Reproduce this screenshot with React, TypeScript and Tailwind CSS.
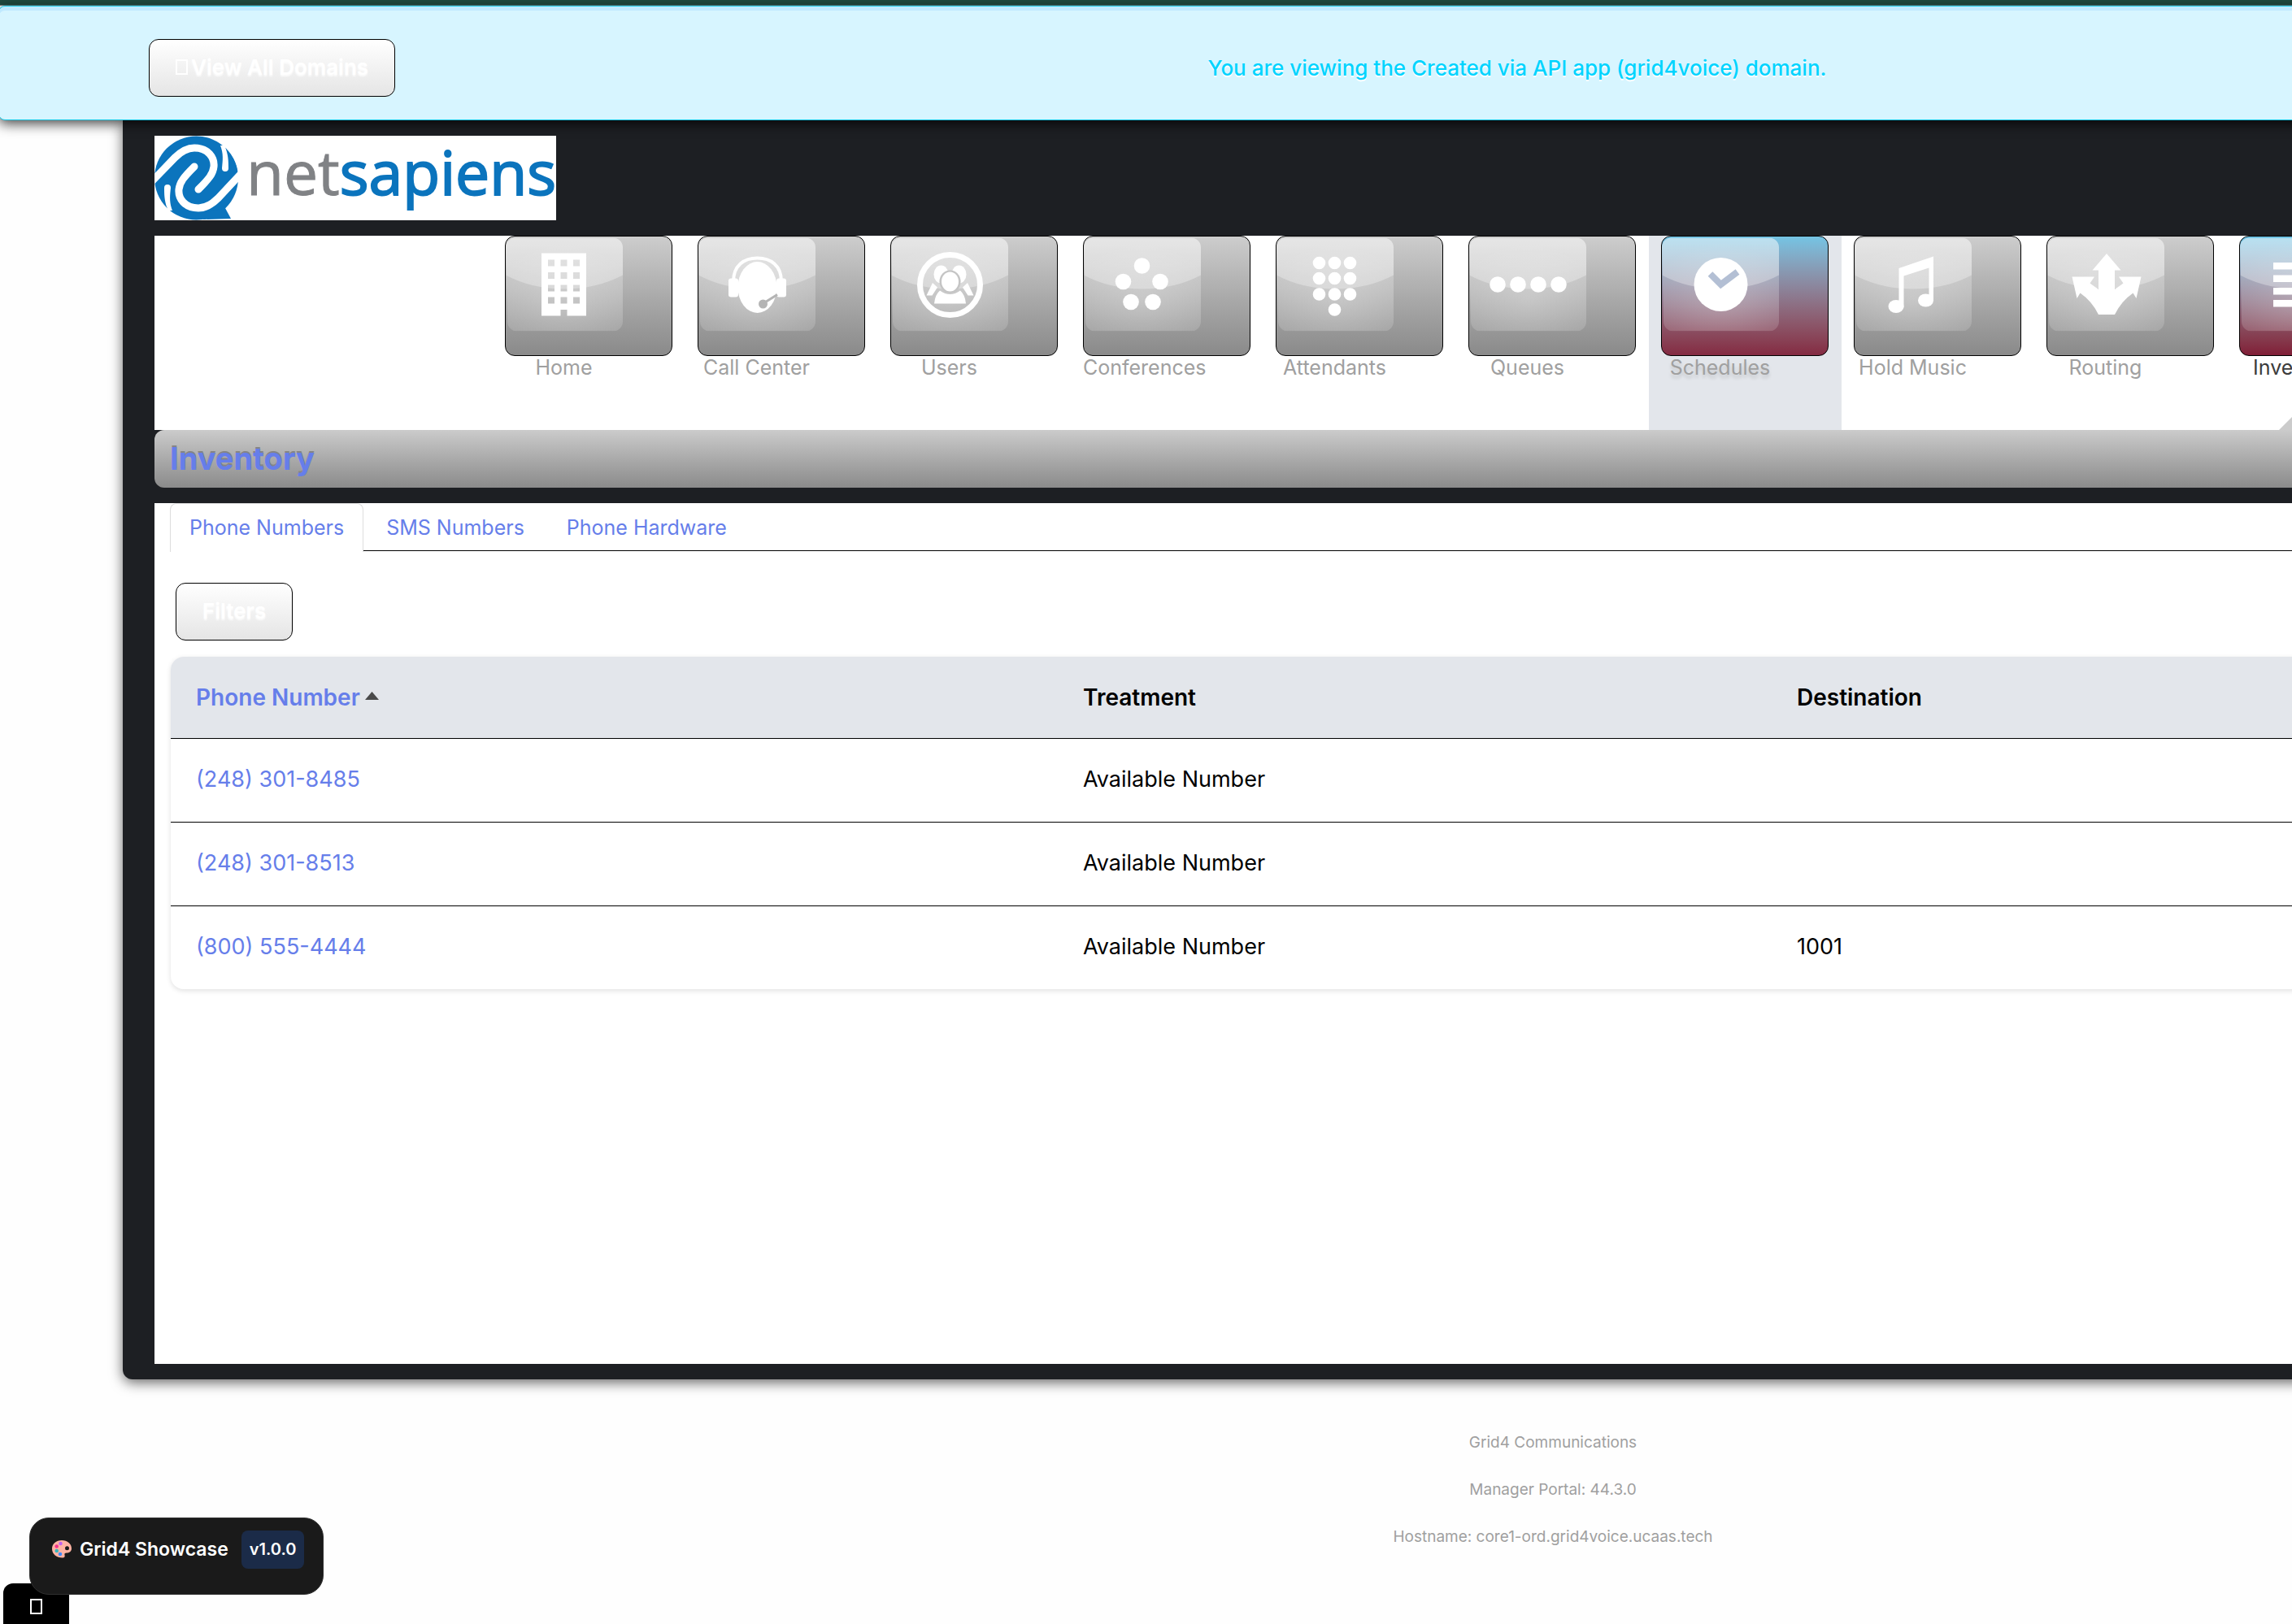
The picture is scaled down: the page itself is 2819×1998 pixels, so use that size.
import type { ReactNode } from "react";

const sans = "font-['Inter','Liberation_Sans',sans-serif]";

type NavItem = { label: string; icon: ReactNode; tone?: "blue" | "hover" };

const dots = (points: number[][], r: number) =>
  points.map(([cx, cy]) => <circle key={`${cx}-${cy}`} cx={cx} cy={cy} r={r} fill="#fff" />);

const items: NavItem[] = [
  {
    label: "Home",
    icon: (
      <path
        fill="#fff"
        fillRule="evenodd"
        d="M44 19h55v77H75.500v-7.500h-8V96H44zM52 27h8v8h-8zM67.500 27h8v8h-8zM83 27h8v8h-8zM52 42.500h8v8h-8zM67.500 42.500h8v8h-8zM83 42.500h8v8h-8zM52 58h8v8h-8zM67.500 58h8v8h-8zM83 58h8v8h-8zM52 73h8v8h-8zM67.500 73h8v8h-8zM83 73h8v8h-8z"
      />
    ),
  },
  {
    label: "Call Center",
    icon: (
      <g>
        <ellipse cx="72.500" cy="61" rx="24" ry="31.500" fill="#fff" />
        <path d="M43 54C43 34 56 25 72.500 25S102 34 102 54" fill="none" stroke="#fff" strokeWidth="4" />
        <rect x="37" y="50" width="12" height="23" rx="3" fill="#fff" />
        <rect x="96" y="50" width="12" height="23" rx="3" fill="#fff" />
        <path d="M97 70L81 80" stroke="#b4b4b4" strokeWidth="3" />
        <circle cx="79.500" cy="81.500" r="5.500" fill="#b4b4b4" />
      </g>
    ),
  },
  {
    label: "Users",
    icon: (
      <g>
        <circle cx="72.500" cy="58" r="37" fill="none" stroke="#fff" strokeWidth="7" />
        <ellipse cx="61.500" cy="45" rx="9" ry="11" fill="#fff" />
        <ellipse cx="83.500" cy="45" rx="9" ry="11" fill="#fff" />
        <path d="M51 55.500L57 61L50.500 71H43.500zM94 55.500L88 61L94.500 71H101.500z" fill="#fff" />
        <ellipse cx="72.500" cy="54" rx="13" ry="14" fill="#c4c4c4" />
        <ellipse cx="72.500" cy="54" rx="10.500" ry="12" fill="#fff" />
        <path d="M60 65Q72.500 74 85 65Q91 70 92 81H53Q54 70 60 65z" fill="#fff" />
      </g>
    ),
  },
  { label: "Conferences", icon: dots([[71.5, 34.5], [48.5, 54], [94, 54], [58, 79], [85, 79]], 9.8) },
  {
    label: "Attendants",
    icon: dots(
      [[52.5, 31], [71.5, 31], [90.5, 31], [52.5, 50], [71.5, 50], [90.5, 50], [52.5, 69.5], [71.5, 69.5], [90.5, 69.5], [71.5, 88.5]],
      7.8,
    ),
  },
  { label: "Queues", icon: dots([[35, 57.5], [60, 57.5], [85, 57.5], [110, 57.5]], 9.8) },
  {
    label: "Schedules",
    tone: "hover",
    icon: (
      <g>
        <circle cx="72.500" cy="57.500" r="33" fill="#fff" />
        <path d="M59.500 44.500L72.500 57.500L93 42" fill="none" stroke="#b3bfd4" strokeWidth="8" />
      </g>
    ),
  },
  {
    label: "Hold Music",
    icon: (
      <g fill="#fff">
        <path d="M54.500 37.500L97 23V78H91.500V37L60.500 47V86H54.500z" />
        <ellipse cx="51" cy="84.500" rx="9.500" ry="8" />
        <ellipse cx="87.500" cy="77" rx="9.500" ry="8" />
      </g>
    ),
  },
  {
    label: "Routing",
    icon: (
      <path
        fill="#fff"
        d="M73 19.500L90.500 40H83V63.500L93.500 56L88 48H115.500L109.500 74.500L105.500 68Q91 78 83 94.500H63Q55 78 40.500 68L36.500 74.500L30.500 48H58L52.500 56L63 63.500V40H55.500z"
      />
    ),
  },
  {
    label: "Inventory",
    tone: "blue",
    icon: <path fill="#fff" d="M41 30.500h62v8.500H41zM41 46h62v8.500H41zM41 61.500h62v8.500H41zM41 76.500h62v8.500H41z" />,
  },
];

function Gloss({ children }: { children: ReactNode }) {
  return (
    <svg className="block" width="144" height="116" viewBox="0 0 144 115" aria-hidden="true">
      <defs>
        <linearGradient id="sheet" x1="0" y1="0" x2="0" y2="1">
          <stop offset="0" stopColor="#fff" stopOpacity="0.3" />
          <stop offset="1" stopColor="#fff" stopOpacity="0.14" />
        </linearGradient>
        <radialGradient id="glow" cx="0.5" cy="0.65" r="0.6">
          <stop offset="0" stopColor="#fff" stopOpacity="0.2" />
          <stop offset="1" stopColor="#fff" stopOpacity="0" />
        </radialGradient>
        <clipPath id="sheet-clip">
          <path d="M0 12A12 12 0 0 1 12 0H132A12 12 0 0 1 144 12V103A12 12 0 0 1 132 115H14A12 12 0 0 1 2 103z" />
        </clipPath>
      </defs>
      <g clipPath="url(#sheet-clip)">
        <rect width="144" height="115" fill="url(#sheet)" />
        <rect width="144" height="115" fill="url(#glow)" />
        <path d="M0 0H144V46Q112 63 72 63T0 46z" fill="#fff" fillOpacity="0.3" />
      </g>
      {children}
    </svg>
  );
}

const tileTone = {
  plain: "from-[#cdcdcd] to-[#8a8a8a]",
  hover: "from-[#74c4e4] to-[#842a42]",
  blue: "from-[#6cc3e6] to-[#801d37]",
};

function NavTile({ item }: { item: NavItem }) {
  const tone = item.tone ?? "plain";
  return (
    <li className={`relative w-[237px] shrink-0 px-[15px] ${tone === "hover" ? "bg-[#e3e6eb]" : ""}`}>
      <a href="#" className="block">
        <span className={`block h-[148px] w-[206px] rounded-xl border border-black bg-linear-to-b pt-px ${tileTone[tone]}`}>
          <Gloss>{item.icon}</Gloss>
        </span>
        <span
          className={`block w-fit min-w-[145px] text-center text-[25px] leading-7 whitespace-nowrap ${
            tone === "blue" ? "text-[#3c3c3c]" : "text-[#a0a0a0]"
          } ${tone === "hover" ? "[text-shadow:0_4px_4px_rgba(0,0,0,0.15)]" : ""}`}
        >
          {item.label}
        </span>
      </a>
      {tone === "blue" && (
        <svg className="absolute bottom-0 left-16" width="44" height="22" viewBox="0 0 44 22" aria-hidden="true">
          <path d="M0 22L22 0L44 22z" fill="#cbcbcb" />
        </svg>
      )}
    </li>
  );
}

function Logo() {
  return (
    <svg className="block overflow-visible bg-white" width="494" height="104" viewBox="0 0 494 104" role="img" aria-label="netsapiens">
      <defs>
        <clipPath id="logo-clip">
          <rect width="494" height="104" />
        </clipPath>
      </defs>
      <g clipPath="url(#logo-clip)">
        <circle cx="51.500" cy="52" r="51.500" fill="#0b74bd" />
        <path d="M60 95L87 89L94 102L60 103z" fill="#0b74bd" />
        <g fill="none" stroke="#fff" strokeWidth="9">
          <path d="M-4 57L25 27Q37 15 49 15C66 15 74 27 73 38C72 47 67 53 54 66" strokeLinecap="round" />
          <path d="M107 46L78 77Q66 89 54 89C37 89 29 77 30 66C31 57 36 51 49 38" strokeLinecap="round" />
        </g>
        <path d="M86 12C91 22 91 32 91 40A4 4 0 0 1 83 40C84 30 85 22 81 12z" fill="#fff" />
        <path d="M17 92C12 82 12 72 12 64A4 4 0 0 1 20 64C19 74 18 82 22 92z" fill="#fff" />
        <path d="M93 22C98 29 101 36 102 43L91 50L91 30z" fill="#0b74bd" />
      </g>
      <text x="113" y="73" fontFamily="Open Sans, Noto Sans, sans-serif" fontSize="75" fill="#0b74bd" stroke="#0b74bd" strokeWidth="2">
        <tspan fill="#808285" stroke="#808285" strokeWidth="1">net</tspan>sapiens
      </text>
    </svg>
  );
}

function Palette() {
  return (
    <svg width="24" height="22" viewBox="0 0 24 22" role="img" aria-label="palette">
      <path
        d="M12 0C19 0 24 4.500 24 10C24 14 21 15.500 18 15.500C15.500 15.500 15 16.500 15.500 18C16 20 15.500 21.500 13 21.500C5.500 21.500 0 17 0 10.500C0 4.500 5 0 12 0z"
        fill="#ffb3a3"
      />
      <circle cx="18.500" cy="9.700" r="2.500" fill="#1a1a1a" />
      <circle cx="10.500" cy="4" r="2.300" fill="#c063f0" />
      <circle cx="5.700" cy="7.500" r="2.300" fill="#f4318b" />
      <circle cx="5.700" cy="13" r="2.300" fill="#35b5bd" />
      <circle cx="10" cy="17" r="2.300" fill="#3f8cff" />
    </svg>
  );
}

const tabs = ["Phone Numbers", "SMS Numbers", "Phone Hardware"];

const rows = [
  { number: "(248) 301-8485", treatment: "Available Number", destination: "" },
  { number: "(248) 301-8513", treatment: "Available Number", destination: "" },
  { number: "(800) 555-4444", treatment: "Available Number", destination: "1001" },
];

const pushButton =
  "h-[71px] items-center rounded-xl border border-black bg-linear-to-b from-white to-[#e5e5e5] px-8 pb-0.5 text-[26px] font-semibold text-white [text-shadow:0_2px_2px_rgba(255,255,255,0.8)]";

export default function App() {
  return (
    <div className={`relative min-h-screen overflow-hidden bg-[#fefefe] ${sans}`}>
      <div className="w-[3820px]">
        <div className="h-1.5 bg-[#204a40]" />
        <div className="h-px bg-[#6b8080]" />

        <div className="relative z-10 -ml-0.5 grid h-[141px] w-[3736px] grid-cols-[1fr_auto_1fr] items-center rounded-lg border border-[#16c8e4] bg-[#d7f5ff] px-[184px] pt-3 shadow-[inset_0_5px_0_#c0e9ff,0_4px_16px_rgba(0,0,0,0.75)]">
          <button type="button" className={`flex gap-1 justify-self-start ${pushButton}`}>
            <span className="h-[19px] w-[15px] border-2 border-white" aria-hidden="true" />
            View All Domains
          </button>
          <p className="text-[26px] font-medium text-[#00d4ff] [text-shadow:0_2px_0_#fff]">
            You are viewing the Created via API app (grid4voice) domain.
          </p>
        </div>

        <div className="mx-[151px] rounded-b-xl bg-[#1d1f23] px-[39px] py-[19px] shadow-[0_4px_16px_rgba(0,0,0,0.6)]">
          <header>
            <Logo />
          </header>

          <nav className="mt-[19px] bg-white">
            <ul className="flex h-[239px] pl-[416px]">
              {items.map((item) => (
                <NavTile key={item.label} item={item} />
              ))}
            </ul>
          </nav>

          <div className="flex h-[71px] items-center rounded-xl bg-linear-to-b from-[#cbcbcb] to-[#8b8b8b] px-[19px]">
            <h1 className="text-[38px] font-bold text-[#667eea] [text-shadow:0_-2px_0_#858585]">Inventory</h1>
          </div>

          <main className="mt-[19px] min-h-[1059px] bg-white px-[19px]">
            <div role="tablist" className="flex h-[59px] border-b border-black text-[25px] leading-[30px] text-[#667eea]">
              {tabs.map((tab, i) => (
                <a
                  key={tab}
                  href="#"
                  role="tab"
                  aria-selected={i === 0}
                  className={
                    i === 0
                      ? "mr-1 h-[60px] rounded-t-lg border border-b-0 border-[#dddddd] bg-white px-[23px] pt-[14px]"
                      : "mr-1 px-6 pt-[15px]"
                  }
                >
                  {tab}
                </a>
              ))}
            </div>

            <button type="button" className={`mt-[39px] ml-[7px] block ${pushButton}`}>
              Filters
            </button>

            <div className="mx-px mt-5 overflow-hidden rounded-2xl shadow-[0_2px_6px_rgba(0,0,0,0.12)]">
              <table className="w-full table-fixed border-separate border-spacing-0 text-left text-[27px] leading-9">
                <thead className="bg-[#e3e6eb] text-[28px]">
                  <tr className="h-[101px]">
                    <th className="w-[1091px] border-b border-black px-[31px] font-semibold">
                      <a href="#" className="flex items-center gap-1.5 text-[#667eea]">
                        Phone Number
                        <svg className="mb-1" width="17" height="10" viewBox="0 0 17 10" aria-hidden="true">
                          <path d="M8.500 0L17 10H0z" fill="#4a4a4a" />
                        </svg>
                      </a>
                    </th>
                    <th className="w-[878px] border-b border-black px-[31px] font-semibold">Treatment</th>
                    <th className="border-b border-black px-[31px] font-semibold">Destination</th>
                  </tr>
                </thead>
                <tbody className="[&>tr:not(:last-child)>td]:border-b">
                  {rows.map((row) => (
                    <tr key={row.number} className="h-[103px] last:h-[102px]">
                      <td className="border-black px-[31px] pb-[3px]">
                        <a href="#" className="text-[#667eea]">
                          {row.number}
                        </a>
                      </td>
                      <td className="border-black px-[31px] pb-[3px]">{row.treatment}</td>
                      <td className="border-black px-[31px] pb-[3px]">{row.destination}</td>
                    </tr>
                  ))}
                </tbody>
              </table>
            </div>
          </main>
        </div>

        <footer className="mt-[49px] text-center text-[19px] leading-[58px] text-[#a0a0a0]">
          <p>Grid4 Communications</p>
          <p>Manager Portal: 44.3.0</p>
          <p>Hostname: core1-ord.grid4voice.ucaas.tech</p>
        </footer>
      </div>

      <button
        type="button"
        aria-label="Settings"
        className="fixed bottom-0 left-1 flex h-[50px] w-[81px] justify-center rounded-tl-xl bg-black pt-[19px]"
      >
        <span className="h-[19px] w-[15px] border-2 border-white" />
      </button>

      <div className="fixed bottom-9 left-9 z-20 flex h-[95px] items-start rounded-3xl border border-[#303030] bg-[#1a1a1a] pt-[15px] pr-[23px] pl-[27px] font-semibold text-white">
        <p className="flex items-center gap-2.5 text-[23px] leading-[46px]">
          <Palette />
          Grid4 Showcase
        </p>
        <span className="ml-4 rounded-lg bg-[#1b2b48] px-2.5 text-xl leading-[47px]">v1.0.0</span>
      </div>
    </div>
  );
}
